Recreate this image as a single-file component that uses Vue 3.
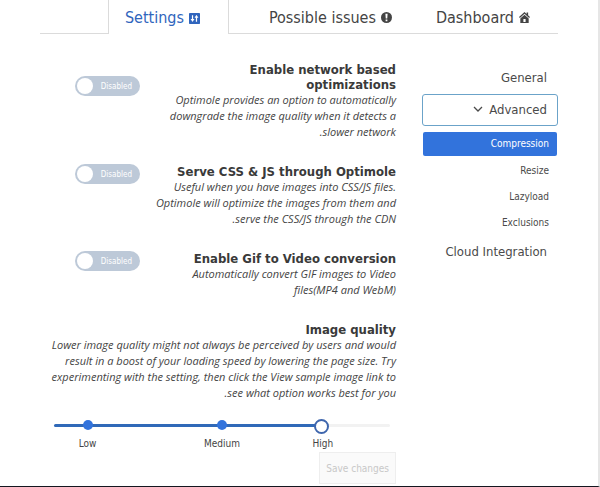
<script setup>
import { ref } from 'vue'

const tabs = [
  { label: 'Dashboard', icon: 'home' },
  { label: 'Possible issues', icon: 'warning' },
  { label: 'Settings', icon: 'sliders', active: true },
]

const options = ref([
  {
    id: 'network',
    title: 'Enable network based\noptimizations',
    text: 'Optimole provides an option to automatically\ndowngrade the image quality when it detects a\nslower network.',
    on: false,
    tall: true,
  },
  {
    id: 'assets',
    title: 'Serve CSS & JS through Optimole',
    text: 'Useful when you have images into CSS/JS files.\u200e\nOptimole will optimize the images from them and\nserve the CSS/JS through the CDN.',
    on: false,
  },
  {
    id: 'gif',
    title: 'Enable Gif to Video conversion',
    text: 'Automatically convert GIF images to Video\nfiles(MP4 and WebM)\u200e',
    on: false,
  },
])

const quality = ref(81)
const marks = [
  { label: 'Low', at: 10, dot: true },
  { label: 'Medium', at: 50, dot: true },
  { label: 'High', at: 80, dot: false },
]
const subItems = ['Compression', 'Resize', 'Lazyload', 'Exclusions']
const current = ref('Compression')
</script>

<template>
  <div class="page" dir="rtl">
    <nav class="tabs">
      <a v-for="tab in tabs" :key="tab.label" href="#" class="tab" :class="{ active: tab.active }">
        <svg v-if="tab.icon === 'home'" class="tab-icon" viewBox="0 0 10 10" aria-hidden="true">
          <path d="M5 0 0 4.6l.8.8L5 1.6l4.2 3.8.8-.8-1.7-1.6V.4H6.9v1.4z" fill="currentColor" />
          <path d="M5 2.6 1.2 5.9V10h7.6V5.9zM4 6.4h2V9H4z" fill="currentColor" fill-rule="evenodd" />
        </svg>
        <svg v-else-if="tab.icon === 'warning'" class="tab-icon" viewBox="0 0 10 10" aria-hidden="true">
          <circle cx="5" cy="5" r="5" fill="currentColor" />
          <path d="M4 1.6h2L5.7 6H4.3zM4.2 6.8h1.6v1.5H4.2z" fill="#fff" />
        </svg>
        <svg v-else class="tab-icon" viewBox="0 0 10 10" aria-hidden="true">
          <rect width="10" height="10" rx="0.6" fill="currentColor" />
          <path d="M3.2 2v5.4M6.8 2.4V8" stroke="#fff" stroke-width="1.1" />
          <path d="M1.4 5.4h3.6L3.2 7.9zM5 4.4h3.6L6.8 1.9z" fill="#fff" />
        </svg>
        <span>{{ tab.label }}</span>
      </a>
    </nav>

    <div class="body">
      <aside class="side">
        <a href="#" class="side-link">General</a>
        <button type="button" class="side-link open">
          <span>Advanced</span>
          <svg class="chevron" viewBox="0 0 10 6" aria-hidden="true">
            <path d="M1 1l4 4 4-4" fill="none" stroke="currentColor" stroke-width="1.3" />
          </svg>
        </button>
        <div class="sub">
          <a
            v-for="item in subItems"
            :key="item"
            href="#"
            class="sub-link"
            :class="{ current: item === current }"
            @click.prevent="current = item"
          >{{ item }}</a>
        </div>
        <a href="#" class="side-link">Cloud Integration</a>
      </aside>

      <main class="main">
        <section v-for="opt in options" :key="opt.id" class="row">
          <div class="copy">
            <h2 class="title">{{ opt.title }}</h2>
            <p class="text">{{ opt.text }}</p>
          </div>
          <label class="toggle" :class="{ lowered: opt.tall, on: opt.on }">
            <input v-model="opt.on" type="checkbox" :aria-label="opt.title" />
            <span class="state">{{ opt.on ? 'Enabled' : 'Disabled' }}</span>
            <span class="knob"></span>
          </label>
        </section>

        <section class="quality">
          <h2 id="quality-title" class="title">Image quality</h2>
          <p class="text">{{ 'Lower image quality might not always be perceived by users and would\nresult in a boost of your loading speed by lowering the page size. Try\nexperimenting with the setting, then click the View sample image link to\nsee what option works best for you.' }}</p>
          <div class="slider" dir="ltr">
            <div class="rail"><div class="fill" :style="{ width: quality + '%' }"></div></div>
            <template v-for="m in marks" :key="m.label">
              <span v-if="m.dot" class="dot" :style="{ left: m.at + '%' }"></span>
              <span class="mark" :style="{ left: m.at + '%' }">{{ m.label }}</span>
            </template>
            <input v-model="quality" class="range" type="range" min="0" max="100" aria-labelledby="quality-title" />
          </div>
        </section>
        <button type="button" class="save" disabled>Save changes</button>
      </main>
    </div>
  </div>
</template>

<style>
body {
  background: #fff;
}
</style>

<style scoped>
.page {
  box-sizing: border-box;
  padding: 0 40px 2px;
  border-right: 2px solid #e6e6e6;
  border-bottom: 1px solid #14171f;
  color: #444;
  font-family: 'DejaVu Sans Condensed', 'Noto Sans', sans-serif;
  overflow: hidden;
}
.tabs {
  display: flex;
  height: 34px;
}
.tabs::after {
  content: '';
  flex: 1;
  border-bottom: 1px solid #dbdbdb;
}
.tab {
  box-sizing: border-box;
  display: flex;
  align-items: center;
  gap: 5px;
  padding: 2px 28px 0 16px;
  border-bottom: 1px solid #dbdbdb;
  color: #444;
  font-size: 16px;
  line-height: 20px;
  text-decoration: none;
  white-space: nowrap;
}
.tab:nth-child(2) {
  padding-left: 40px;
}
.tab.active {
  border: solid #dbdbdb;
  border-width: 0 1px;
  color: #3065bd;
}
.tab-icon {
  width: 11px;
  height: 11px;
}
.body {
  display: flex;
  gap: 26px;
  padding-top: 28px;
}
.side {
  flex: none;
  width: 136px;
}
.side-link {
  box-sizing: border-box;
  display: flex;
  align-items: center;
  gap: 6px;
  width: 100%;
  height: 32px;
  padding: 0 10px 2px;
  border: 1px solid transparent;
  border-radius: 3px;
  background: none;
  color: #4a4a4a;
  font-family: inherit;
  font-size: 13px;
  text-decoration: none;
}
.side-link.open {
  border-color: #6ba3c9;
}
.chevron {
  width: 10px;
  height: 6px;
}
.sub {
  margin: 6px 1px 0;
}
.sub-link {
  display: block;
  height: 26px;
  padding: 0 8px;
  color: #4a4a4a;
  font-size: 10px;
  line-height: 26px;
  text-decoration: none;
}
.sub-link.current {
  height: 24px;
  border-radius: 2px;
  margin-bottom: 2px;
  background: #3273dc;
  color: #fff;
  line-height: 24px;
}
.main {
  flex: 1;
  min-width: 0;
  padding-left: 14px;
}
.row {
  display: flex;
  justify-content: space-between;
  margin-bottom: 24px;
  padding-left: 21px;
}
.title {
  margin: 0;
  color: #3a3a3a;
  font-size: 13px;
  line-height: 15px;
  font-weight: 700;
  white-space: pre;
}
.text {
  margin: 0;
  font-family: 'Open Sans', sans-serif;
  font-size: 11px;
  line-height: 16px;
  font-style: italic;
  white-space: pre;
}
.toggle {
  position: relative;
  box-sizing: border-box;
  display: flex;
  align-items: center;
  flex: none;
  width: 65px;
  height: 20px;
  padding: 0 8px;
  border-radius: 10px;
  background: #bdc9d8;
  color: #fff;
  font-size: 8px;
}
.toggle.on {
  background: #3273dc;
}
.toggle.lowered {
  margin-top: 14px;
}
.toggle input {
  position: absolute;
  inset: 0;
  width: 100%;
  height: 100%;
  margin: 0;
  opacity: 0;
}
.knob {
  position: absolute;
  top: 2px;
  left: 2px;
  width: 16px;
  height: 16px;
  border-radius: 50%;
  background: #fff;
}
.slider {
  position: relative;
  height: 32px;
  margin: 19px 6px 0 0;
}
.rail {
  position: absolute;
  top: 4px;
  width: 100%;
  height: 3px;
  border-radius: 2px;
  background: #f2f2f2;
}
.fill {
  height: 3px;
  border-radius: 2px;
  background: #3069b8;
}
.dot {
  position: absolute;
  top: 0;
  width: 10px;
  height: 10px;
  margin-left: -5px;
  border-radius: 50%;
  background: #3273dc;
}
.mark {
  position: absolute;
  top: 16px;
  font-size: 10px;
  line-height: 16px;
  transform: translateX(-50%);
}
.range {
  position: absolute;
  top: -2px;
  left: 0;
  width: 100%;
  height: 16px;
  margin: 0;
  background: none;
  appearance: none;
}
.range::-webkit-slider-thumb {
  box-sizing: border-box;
  width: 15px;
  height: 15px;
  border: 2px solid #3f66ad;
  border-radius: 50%;
  background: #fff;
  appearance: none;
}
.save {
  display: block;
  height: 32px;
  padding: 0 6px;
  border: 1px solid #eee;
  background: #fafafa;
  color: #c8c8c8;
  font-family: inherit;
  font-size: 10px;
}
</style>
